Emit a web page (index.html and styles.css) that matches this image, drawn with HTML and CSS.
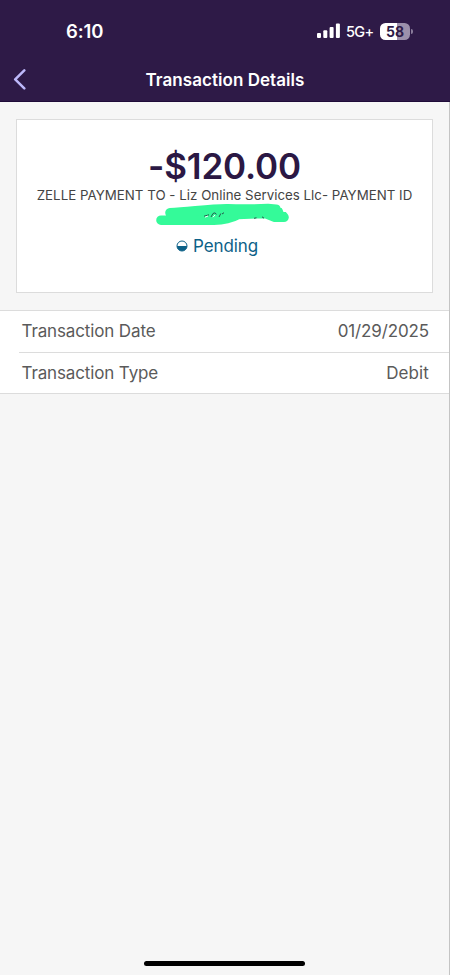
FILE: index.html
```
<!DOCTYPE html>
<html lang="en">
<head>
<meta charset="utf-8">
<title>Transaction Details</title>
<link rel="stylesheet" href="styles.css">
</head>
<body>
<div class="screen">
  <header class="header">
    <div class="status">
      <span class="time">6:10</span>
      <div class="indicators">
        <svg class="signal" width="24" height="16" viewBox="0 0 24 16" fill="#fff">
          <rect x="0" y="10" width="4" height="5" rx="1"/>
          <rect x="6.3" y="7.3" width="4" height="7.7" rx="1"/>
          <rect x="12.6" y="4" width="4" height="11" rx="1"/>
          <rect x="18.9" y="0.5" width="4" height="14.5" rx="1"/>
        </svg>
        <span class="network">5G+</span>
        <div class="battery"><span class="level">58</span></div>
        <span class="battery-tip"></span>
      </div>
    </div>
    <nav class="nav">
      <svg class="back" width="14" height="22" viewBox="0 0 14 22" fill="none" stroke="#bdb8fa" stroke-width="2.5" stroke-linecap="round" stroke-linejoin="round">
        <path d="M11.3 2.4 2.2 11.4 11.3 20.4"/>
      </svg>
      <h1 class="title">Transaction Details</h1>
    </nav>
  </header>
  <main class="content">
    <section class="card">
      <div class="amount">-$120.00</div>
      <div class="memo">ZELLE PAYMENT TO - Liz Online Services Llc- PAYMENT ID</div>
      <svg class="scribble" width="136" height="24" viewBox="155 202 136 24">
        <path d="M161 220.2H214Q228 220 238 214.5L280 212.5 284 217.3 275 217.3 262 212 276 209.2 268 208.6Q245 209.5 228 208.8C210 208.5 190 212 170 212.8" fill="#34fa99" stroke="#34fa99" stroke-width="9.6" stroke-linecap="round" stroke-linejoin="round"/>
        <path d="M281.5 207.2 283.5 212H289L286 206Z" fill="#fff"/>
        <path d="M204 216.2 209 214.8M211 217 213 213.5Q215 211.8 216.5 214.3M219 217 220.8 213.5M222 214 224 212.7M254 218.3 256.5 217.8M262 216.8 264 218.2" fill="none" stroke="#24594c" stroke-width="1"/>
        <path d="M205 217.2 208 216M213 217.2 215 215" fill="none" stroke="#fff" stroke-width="1"/>
      </svg>
      <div class="pending">
        <svg width="12" height="12" viewBox="0 0 12 12">
          <circle cx="6" cy="6" r="5" fill="#fff" stroke="#0d6188" stroke-width="1"/>
          <path d="M1 6H11A5 5 0 0 1 1 6Z" fill="#0d6188"/>
        </svg>
        <span>Pending</span>
      </div>
    </section>
    <dl class="details">
      <div class="row"><dt>Transaction Date</dt><dd>01/29/2025</dd></div>
      <div class="row"><dt>Transaction Type</dt><dd class="type">Debit</dd></div>
    </dl>
  </main>
  <div class="home"></div>
</div>
</body>
</html>
```

FILE: styles.css
```
* { box-sizing: border-box; margin: 0; }
body { font-family: Inter, "Liberation Sans", sans-serif; }
.screen {
  display: flex;
  flex-direction: column;
  width: 450px;
  height: 975px;
  overflow: hidden;
  background: linear-gradient(#c4c4c4, #c4c4c4) right / 1px 100% no-repeat #f6f6f6;
  white-space: nowrap;
}
.header { height: 102px; background: #2e1a47; color: #fff; border-bottom: 1px solid #1f0b38; }
.status { display: flex; justify-content: space-between; height: 57px; padding: 5px 37px 0 66px; align-items: center; }
.time { font-size: 18.5px; font-weight: 600; letter-spacing: -0.1px; }
.indicators { display: flex; align-items: center; }
.signal { margin-right: 5px; }
.network { width: 28px; font-size: 14.5px; font-weight: 500; letter-spacing: -0.6px; margin-right: 6px; }
.battery {
  display: flex;
  align-items: center;
  justify-content: center;
  width: 30px;
  height: 17px;
  border-radius: 5.5px;
  background: linear-gradient(90deg, #fff 57%, #9c90ab 57%);
}
.level { font-size: 14px; font-weight: 700; color: #2e1a47; letter-spacing: -0.1px; }
.battery-tip { width: 2px; height: 5px; margin-left: 1px; border-radius: 0 2px 2px 0; background: #8a7c9b; }
.nav { display: grid; grid-template-columns: 40px 1fr 40px; align-items: center; height: 44px; }
.back { margin-left: 13px; }
.title { font-size: 17px; line-height: 22px; padding-top: 1px; font-weight: 600; text-align: center; letter-spacing: 0.05px; }
.content { flex: 1; padding-top: 17px; margin-right: 1px; }
.card {
  display: flex;
  flex-direction: column;
  align-items: center;
  width: 417px;
  height: 174px;
  margin: 0 0 17px 16px;
  padding-top: 26px;
  background: #fff;
  border: 1px solid #dcdcdc;
}
.amount { font-size: 35px; line-height: 40px; font-weight: 600; letter-spacing: -0.15px; color: #2b1844; }
.memo { font-size: 13.3px; line-height: 18px; letter-spacing: 0.02px; color: #444; }
.scribble { margin: -2px 0 0 -3px; }
.pending { display: flex; align-items: center; gap: 5px; height: 22px; margin-top: 9px; margin-right: 15px; color: #0d6188; font-size: 17px; letter-spacing: -0.1px; }
.details { background: #fff; border-top: 1px solid #dcdcdc; border-bottom: 1px solid #dcdcdc; }
.row { display: flex; justify-content: space-between; align-items: center; height: 41px; margin-left: 19px; padding: 0 20px 0 2.5px; color: #5a5a5a; font-size: 17px; line-height: 21px; letter-spacing: -0.13px; }
.row + .row { padding-top: 1px; border-top: 1px solid #dcdcdc; }
.type { letter-spacing: 0.1px; }
.home { flex: none; width: 161px; height: 5px; margin: 0 0 9px 144px; border-radius: 3px; background: #000; }
```
